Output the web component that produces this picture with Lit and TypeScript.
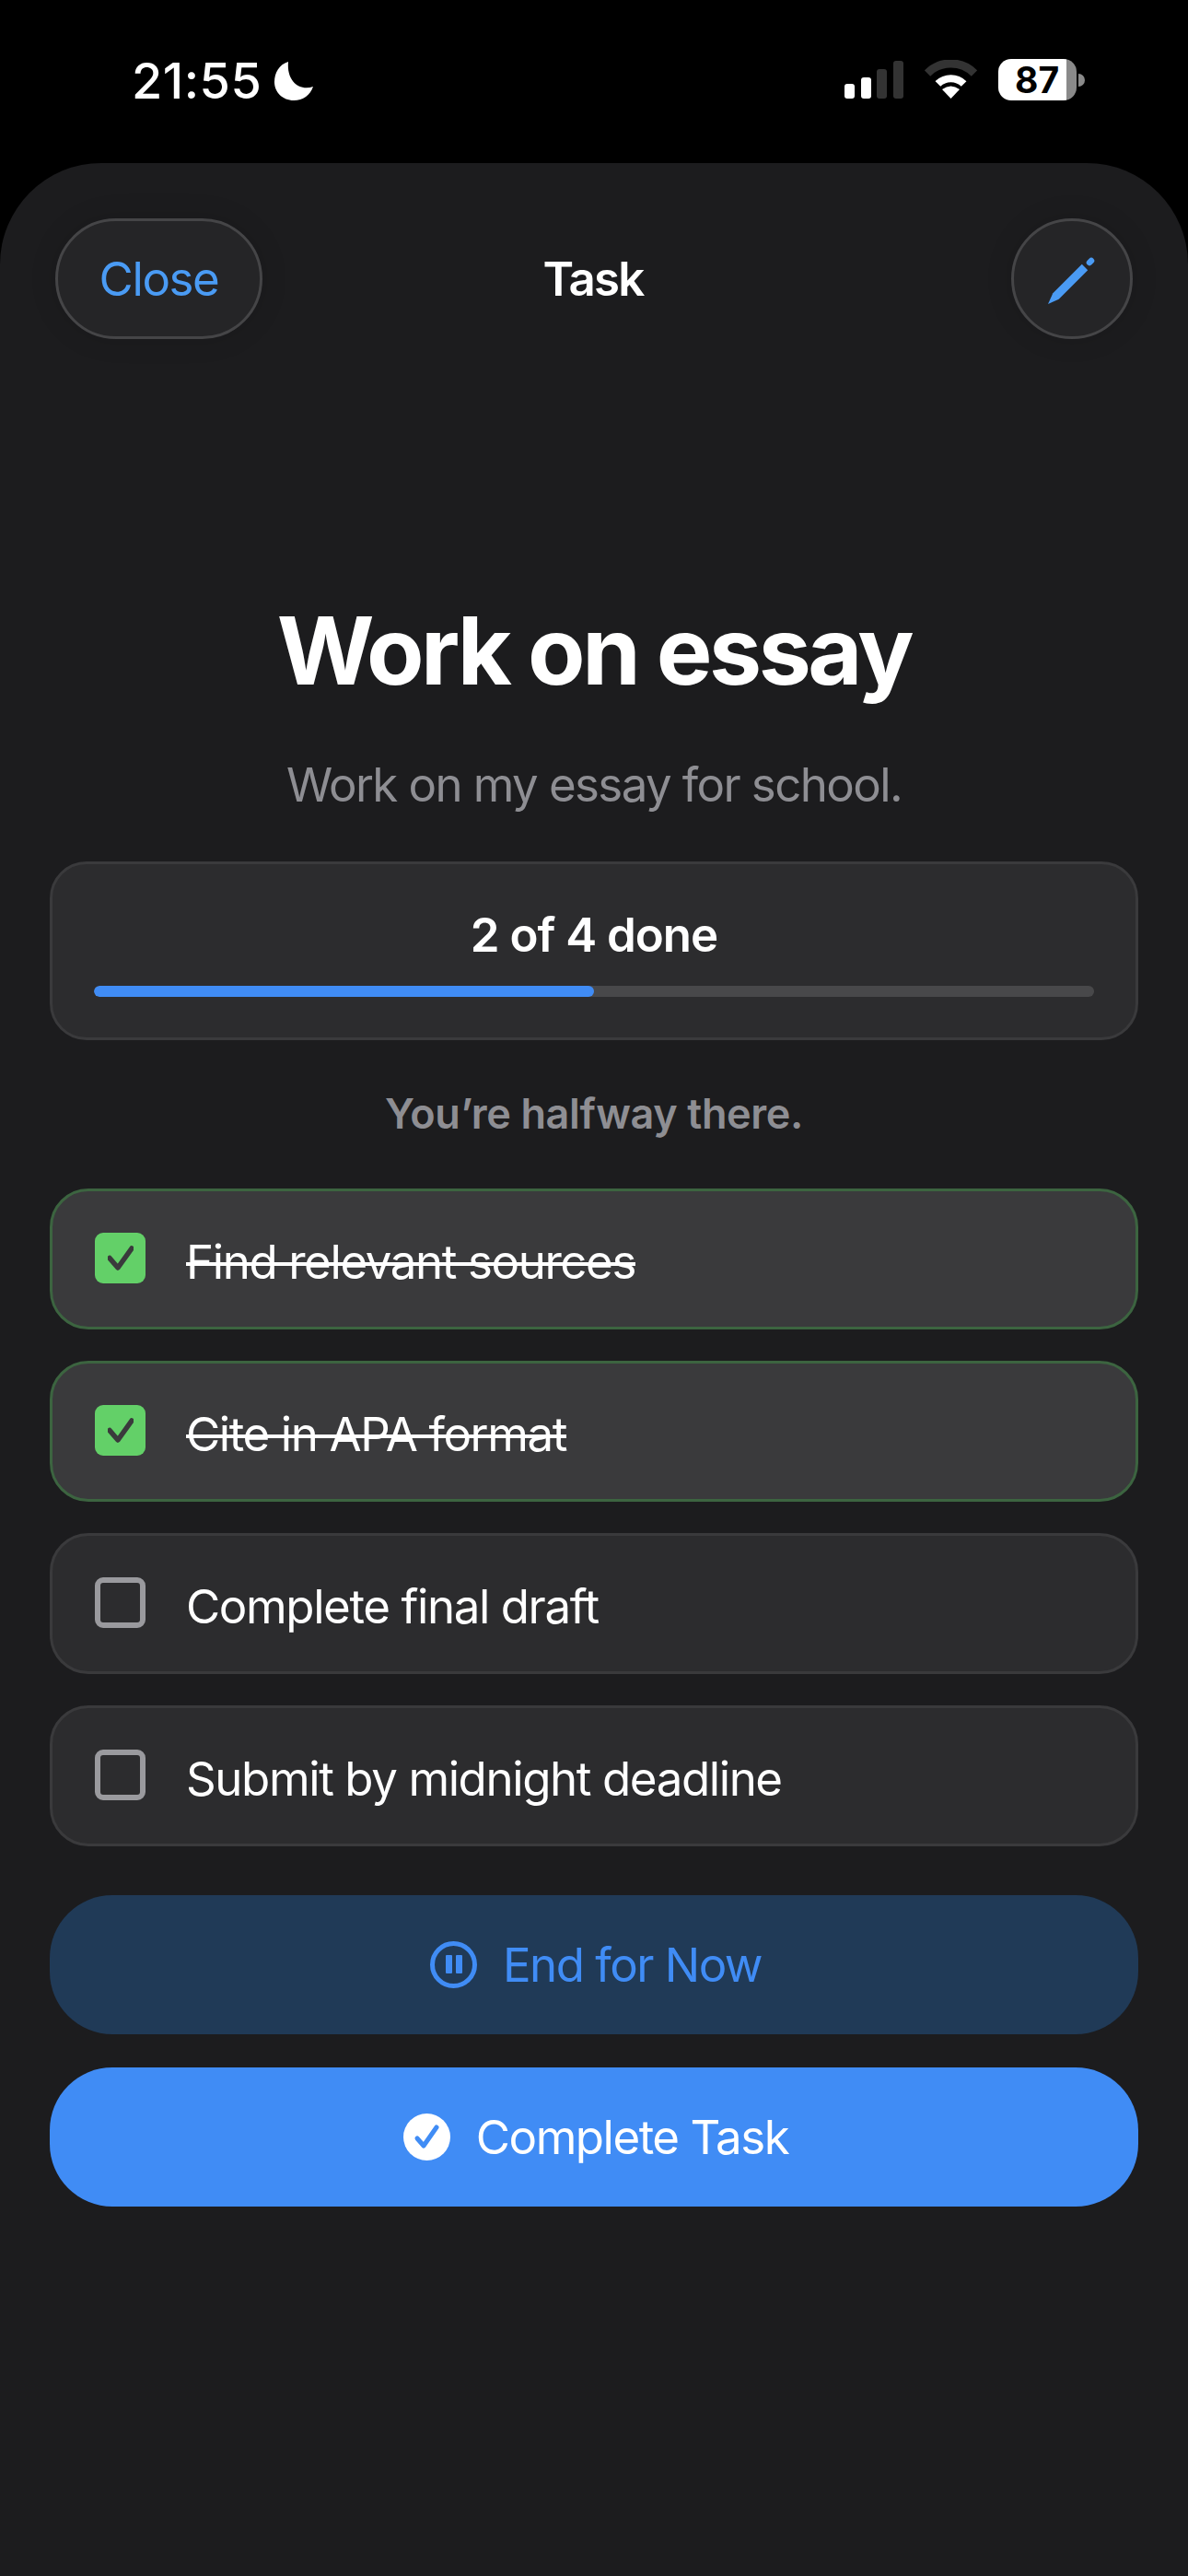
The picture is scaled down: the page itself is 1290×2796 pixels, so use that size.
import { LitElement, css, html, svg } from 'lit';
import { customElement, state } from 'lit/decorators.js';
import { classMap } from 'lit/directives/class-map.js';

interface Task {
  title: string;
  done: boolean;
}

const checkMark = svg`<path d="M2 13.5 L11 24 L26 3" fill="none" stroke-width="5.5" stroke-linecap="round" stroke-linejoin="round" />`;

@customElement('app-root')
export class AppRoot extends LitElement {
  static styles = css`
    :host {
      display: block;
      width: 1290px;
      height: 2796px;
      background: #000;
      color: #fff;
      font-family: Inter, 'Liberation Sans', sans-serif;
      overflow: hidden;
    }
    .status {
      height: 177px;
      box-sizing: border-box;
      padding: 65px 112px 0 143px;
      display: flex;
      justify-content: space-between;
      align-items: flex-start;
    }
    .clock {
      display: flex;
      align-items: center;
      gap: 14px;
    }
    .time {
      font-size: 54px;
      font-weight: 500;
      line-height: 46px;
      letter-spacing: 0.5px;
    }
    .indicators {
      display: flex;
      align-items: flex-end;
      gap: 23px;
      height: 45px;
      margin-top: -1px;
    }
    .bars {
      display: block;
      margin-bottom: 2px;
    }
    .wifi {
      display: block;
      margin-bottom: 2px;
    }
    .battery {
      display: flex;
      align-items: center;
      gap: 2px;
    }
    .cell {
      width: 85px;
      height: 45px;
      border-radius: 14px;
      background: linear-gradient(90deg, #fff 74px, #8a8a8a 74px);
      color: #000;
      font-size: 39px;
      font-weight: 700;
      line-height: 45px;
      box-sizing: border-box;
      padding-left: 18px;
    }
    .nub {
      width: 7px;
      height: 14px;
      border-radius: 0 7px 7px 0;
      background: #8a8a8a;
    }
    .sheet {
      height: 2619px;
      box-sizing: border-box;
      background: #1c1c1e;
      border-radius: 110px 110px 0 0;
      padding: 60px 54px 0;
    }
    .nav {
      display: grid;
      grid-template-columns: 1fr auto 1fr;
      align-items: center;
      padding: 0 6px;
    }
    .round {
      height: 131px;
      box-sizing: border-box;
      border: 3px solid #454547;
      border-radius: 66px;
      background: #252527;
      display: flex;
      align-items: center;
      justify-content: center;
      box-shadow: 0 0 30px rgba(0, 0, 0, 0.12);
    }
    .close {
      width: 225px;
      color: #4a9bf4;
      font-size: 51px;
      letter-spacing: -1.4px;
      justify-self: start;
    }
    .edit {
      width: 132px;
      justify-self: end;
    }
    .edit svg {
      margin-top: 2px;
    }
    .nav-title {
      font-size: 51px;
      font-weight: 600;
      letter-spacing: -1.8px;
      padding-right: 2px;
    }
    h1 {
      margin: 278px 0 0;
      font-size: 102px;
      font-weight: 700;
      line-height: 120px;
      text-align: center;
      letter-spacing: -3.5px;
    }
    .subtitle {
      margin: 55px 0 0;
      font-size: 51px;
      line-height: 62px;
      text-align: center;
      color: #8e8e93;
      letter-spacing: -1.6px;
    }
    .progress {
      margin-top: 52px;
      height: 194px;
      box-sizing: border-box;
      border: 3px solid #3a3a3c;
      border-radius: 40px;
      background: #2c2c2e;
      padding: 46px 45px 0;
    }
    .count {
      font-size: 51px;
      font-weight: 600;
      line-height: 62px;
      text-align: center;
      letter-spacing: -1px;
    }
    .track {
      margin-top: 24px;
      height: 12px;
      border-radius: 6px;
      background: #48484a;
      overflow: hidden;
    }
    .fill {
      height: 100%;
      border-radius: 6px;
      background: #408cf5;
    }
    .hint {
      margin: 53px 0 0;
      font-size: 45px;
      font-weight: 600;
      line-height: 54px;
      text-align: center;
      color: #8e8e93;
      letter-spacing: -0.4px;
    }
    .tasks {
      margin-top: 54px;
      display: flex;
      flex-direction: column;
      gap: 34px;
    }
    .task {
      height: 153px;
      box-sizing: border-box;
      border: 3px solid #3a3a3c;
      border-radius: 42px;
      background: #2c2c2e;
      padding: 0 46px;
      display: flex;
      align-items: center;
      gap: 44px;
      font-size: 51px;
      letter-spacing: -1.4px;
    }
    .task.done {
      border-color: #3c6440;
      background: #3a3a3c;
    }
    .label {
      padding-top: 6px;
    }
    .task.done .label {
      text-decoration: line-through;
      text-decoration-thickness: 4px;
    }
    .box {
      width: 55px;
      height: 55px;
      box-sizing: border-box;
      border: 6px solid #9a9a9e;
      border-radius: 9px;
      flex: none;
      display: flex;
      align-items: center;
      justify-content: center;
      margin-top: -2px;
    }
    .task.done .box {
      border: none;
      background: #63d068;
      stroke: #3a3a3c;
    }
    .actions {
      margin-top: 53px;
      display: flex;
      flex-direction: column;
      gap: 36px;
    }
    .action {
      height: 151px;
      box-sizing: border-box;
      padding-left: 4px;
      border-radius: 68px;
      display: flex;
      align-items: center;
      justify-content: center;
      gap: 28px;
      font-size: 51px;
      letter-spacing: -1.5px;
    }
    .action.end {
      background: #203a57;
      color: #408cf5;
    }
    .action.complete {
      background: #408cf5;
    }
  `;

  @state() private tasks: Task[] = [
    { title: 'Find relevant sources', done: true },
    { title: 'Cite in APA format', done: true },
    { title: 'Complete final draft', done: false },
    { title: 'Submit by midnight deadline', done: false },
  ];

  private renderStatus() {
    return html`
      <div class="status">
        <div class="clock">
          <span class="time">21:55</span>
          <svg width="42" height="42" viewBox="0 0 42 42">
            <path fill="#fff" d="M15 0C5 3 0 12 0 22C0 33 9 42 21 42C31 42 39 36 42 27C28 32 13 22 15 0Z" />
          </svg>
        </div>
        <div class="indicators">
          <svg class="bars" width="64" height="41" viewBox="0 0 64 41">
            <rect x="0" y="25" width="11" height="16" rx="3" fill="#fff" />
            <rect x="18" y="18" width="11" height="23" rx="3" fill="#fff" />
            <rect x="35" y="9" width="11" height="32" rx="3" fill="#333" />
            <rect x="53" y="0" width="11" height="41" rx="3" fill="#333" />
          </svg>
          <svg class="wifi" width="57" height="42" viewBox="0 0 57 42">
            <path d="M3 14.5A36 36 0 0 1 54 14.5" fill="none" stroke="#333" stroke-width="9" />
            <path d="M14.4 26A20 20 0 0 1 42.6 26" fill="none" stroke="#fff" stroke-width="8" />
            <path d="M28.5 42L19 32Q28.5 25 38 32Z" fill="#fff" />
          </svg>
          <div class="battery">
            <div class="cell">87</div>
            <div class="nub"></div>
          </div>
        </div>
      </div>
    `;
  }

  private renderTask(task: Task) {
    return html`
      <div class=${classMap({ task: true, done: task.done })}>
        <div class="box">
          ${task.done ? html`<svg width="28" height="27" viewBox="0 0 28 27">${checkMark}</svg>` : null}
        </div>
        <span class="label">${task.title}</span>
      </div>
    `;
  }

  render() {
    const finished = this.tasks.filter((t) => t.done).length;
    const percent = (finished / this.tasks.length) * 100;
    return html`
      ${this.renderStatus()}
      <div class="sheet">
        <div class="nav">
          <div class="round close">Close</div>
          <div class="nav-title">Task</div>
          <div class="round edit">
            <svg width="54" height="54" viewBox="0 0 54 54">
              <path fill="#4a9bf4" d="M1 53L6.3 41.3L37.8 9.8L44.2 16.2L12.7 47.7Z" />
              <line x1="46" y1="8" x2="48" y2="6" stroke="#4a9bf4" stroke-width="6.5" stroke-linecap="round" />
            </svg>
          </div>
        </div>
        <h1>Work on essay</h1>
        <p class="subtitle">Work on my essay for school.</p>
        <div class="progress">
          <div class="count">${finished} of ${this.tasks.length} done</div>
          <div class="track"><div class="fill" style="width: ${percent}%"></div></div>
        </div>
        <p class="hint">You’re halfway there.</p>
        <div class="tasks">${this.tasks.map((t) => this.renderTask(t))}</div>
        <div class="actions">
          <div class="action end">
            <svg width="51" height="51" viewBox="0 0 51 51">
              <circle cx="25.5" cy="25.5" r="23" fill="none" stroke="#408cf5" stroke-width="5" />
              <rect x="17" y="15" width="7" height="20" rx="1" fill="#408cf5" />
              <rect x="28" y="15" width="7" height="20" rx="1" fill="#408cf5" />
            </svg>
            End for Now
          </div>
          <div class="action complete">
            <svg width="51" height="51" viewBox="0 0 51 51">
              <circle cx="25.5" cy="25.5" r="25.5" fill="#fff" />
              <path d="M15 27L22 35L36 15" fill="none" stroke="#408cf5" stroke-width="5" stroke-linecap="round" stroke-linejoin="round" />
            </svg>
            Complete Task
          </div>
        </div>
      </div>
    `;
  }
}
